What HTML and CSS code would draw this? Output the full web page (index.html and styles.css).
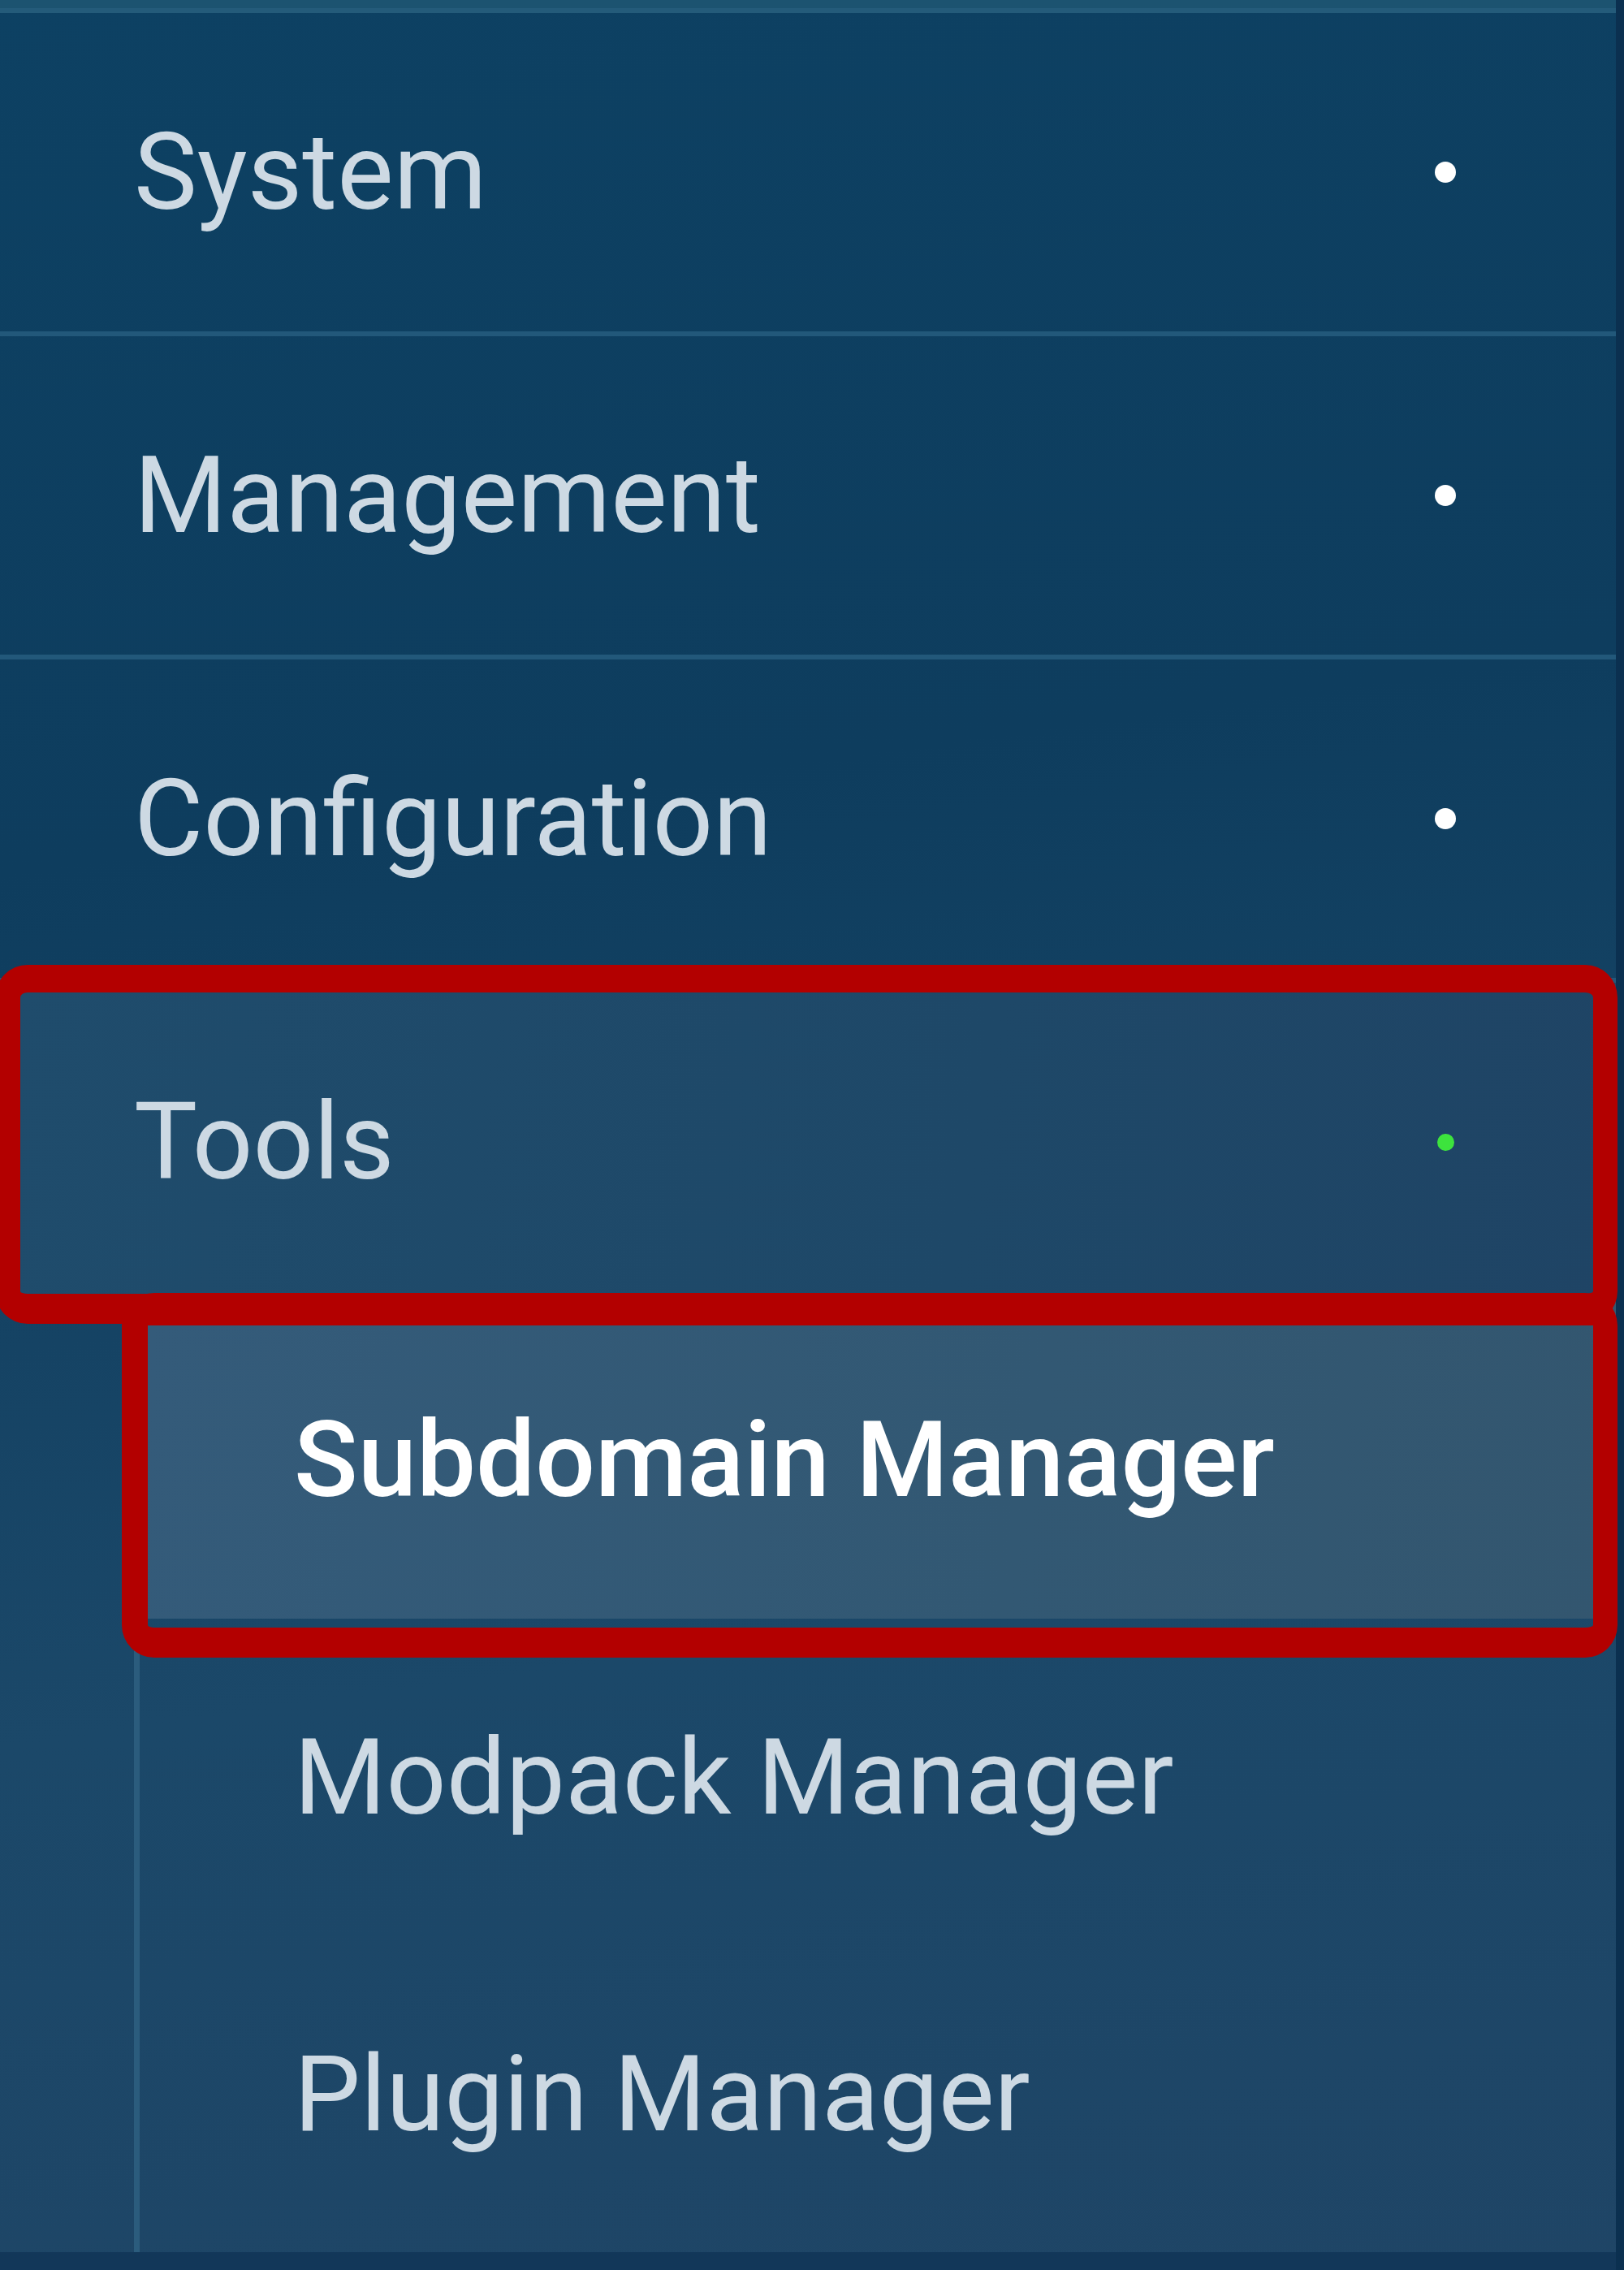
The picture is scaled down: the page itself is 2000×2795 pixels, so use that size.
FILE: index.html
```html
<!DOCTYPE html>
<html lang="en">
<head>
  <meta charset="UTF-8">
  <meta name="viewport" content="width=device-width, initial-scale=1.0">
  <title>Sidebar</title>
  <link rel="stylesheet" href="styles.css">
</head>
<body>
  <nav class="sidebar">
    <div class="head"></div>
    <ul class="menu">
      <li class="item"><span class="label">System</span><span class="dot"></span></li>
      <li class="item"><span class="label">Management</span><span class="dot"></span></li>
      <li class="item"><span class="label">Configuration</span><span class="dot"></span></li>
      <li class="item open marked"><span class="label">Tools</span><span class="dot green"></span></li>
    </ul>
    <ul class="submenu">
      <li class="sub active marked">Subdomain Manager</li>
      <li class="sub">Modpack Manager</li>
      <li class="sub">Plugin Manager</li>
    </ul>
    <div class="foot"></div>
  </nav>
</body>
</html>
```

FILE: styles.css
```css
body {
  margin: 0;
  background: #0b3050;
  font-family: Roboto, "Liberation Sans", sans-serif;
  overflow: hidden;
}

ul {
  list-style: none;
  margin: 0;
  padding: 0;
}

.sidebar {
  width: 1990px;
  height: 2795px;
  display: flex;
  flex-direction: column;
  background: linear-gradient(172deg, #0d4163 0%, #0e3d5e 35%, #1b4869 70%, #1f4566 100%);
}

.head {
  height: 10px;
  background: #1c5370;
  border-bottom: 6px solid #245b7a;
}

.item {
  position: relative;
  height: 392px;
  border-bottom: 6px solid #22587a;
  display: flex;
  align-items: center;
  justify-content: space-between;
  padding: 0 197px 0 165px;
  font-size: 131px;
  color: #cdd9e3;
}

.item.open {
  border-bottom: none;
  background: linear-gradient(100deg, #1f4c6c 0%, #1e4868 60%, #1f4465 100%);
}

.dot {
  width: 26px;
  height: 26px;
  border-radius: 50%;
  background: #ffffff;
}

.dot.green {
  width: 21px;
  height: 21px;
  margin-right: 2px;
  background: #3de33d;
}

.submenu {
  margin-left: 165px;
  border-left: 7px solid #2b5c7d;
}

.sub {
  position: relative;
  height: 390px;
  display: flex;
  align-items: center;
  padding-left: 190px;
  font-size: 130px;
  color: #cdd9e3;
}

.sub.active {
  height: 391px;
  background: linear-gradient(100deg, #345b7a 0%, #325873 60%, #33566f 100%);
  color: #ffffff;
  font-weight: 500;
}

.marked::after {
  content: "";
  position: absolute;
  z-index: 2;
  border-style: solid;
  border-color: #b30000;
  border-radius: 40px;
  pointer-events: none;
}

.item.marked::after {
  top: -22px;
  right: -2px;
  bottom: -28px;
  left: -6px;
  border-width: 34px 30px 37px 31px;
}

.sub.marked::after {
  top: -10px;
  right: -2px;
  bottom: -48px;
  left: -22px;
  border-width: 40px 30px 37px 32px;
}

.foot {
  flex: 1;
  background: #123759;
}
```
